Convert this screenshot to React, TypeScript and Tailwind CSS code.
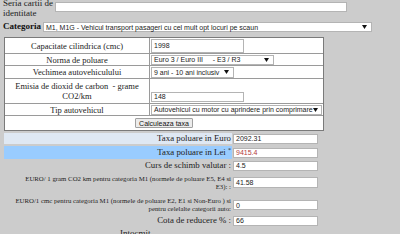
const serif = "font-['Liberation_Serif',serif]";
const sans = "font-['Liberation_Sans',Arial,sans-serif]";

function Arrow() {
  return (
    <svg width="5" height="4" viewBox="0 0 5 4" className="shrink-0">
      <path d="M0 0 L5 0 L2.5 4 Z" fill="#111" />
    </svg>
  );
}

function Field({ value, className = "", color = "text-[#222]" }: { value: string; className?: string; color?: string }) {
  return (
    <div
      className={`flex items-center bg-white border border-[#b4b4b4] px-[2px] text-[7px] leading-none ${sans} ${color} ${className}`}
    >
      {value}
    </div>
  );
}

function Select({ value, className = "" }: { value: string; className?: string }) {
  return (
    <div
      className={`flex items-center justify-between bg-white border border-[#b4b4b4] pl-[2px] pr-[4px] text-[7px] leading-none text-[#222] whitespace-pre ${sans} ${className}`}
    >
      <span>{value}</span>
      <Arrow />
    </div>
  );
}

function Row({ label, h, children }: { label: React.ReactNode; h: string; children: React.ReactNode }) {
  return (
    <div className={`flex border-b border-[#9a9a9a] ${h}`}>
      <div
        className={`w-[145px] shrink-0 flex items-center justify-center text-center text-[8.5px] leading-[10px] text-[#222] border-r border-[#9a9a9a] ${serif}`}
      >
        {label}
      </div>
      <div className="flex-1 flex items-center pl-[1px]">{children}</div>
    </div>
  );
}

function Result({
  label,
  value,
  h,
  bg = "",
  valueColor,
  small = false,
  inputTop = "",
}: {
  label: React.ReactNode;
  value: string;
  h: string;
  bg?: string;
  valueColor?: string;
  small?: boolean;
  inputTop?: string;
}) {
  return (
    <div className={`flex ${h}`}>
      <div
        className={`ml-[4px] w-[228px] shrink-0 flex items-center justify-end text-right pr-[1px] text-[#222] ${serif} ${bg} ${
          small ? "text-[6.8px] leading-[8px] whitespace-nowrap" : "text-[8.8px] leading-none"
        }`}
      >
        {label}
      </div>
      <div className={`ml-[1px] flex ${inputTop ? "items-start" : "items-center"}`}>
        <Field value={value} className={`w-[85px] h-[10px] ${inputTop}`} color={valueColor} />
      </div>
    </div>
  );
}

export default function App() {
  return (
    <div className="w-[400px] h-[247px] bg-white overflow-hidden">
      <div className="h-[234px] bg-[#cccccc] overflow-hidden">
        {/* Seria CI */}
        <div className="flex items-start -mt-[2px]">
          <div className={`w-[52px] pl-[3px] whitespace-nowrap text-[9px] leading-[10px] text-[#222] ${serif}`}>
            Seria cartii de
            <br />
            identitate
          </div>
          <Field value="" className="ml-[3px] mt-[4px] w-[292px] h-[10px]" />
        </div>

        {/* Categoria */}
        <div className="flex items-center mt-[4px] h-[10px]">
          <div className={`pl-[3px] w-[43px] text-[9px] font-bold text-[#111] ${serif}`}>Categoria</div>
          <Select
            value="M1, M1G - Vehicul transport pasageri cu cel mult opt locuri pe scaun"
            className="w-[329px] h-[10px]"
          />
        </div>

        {/* Form table */}
        <div className="mt-[5px] ml-[4px] w-[320px] bg-white border border-[#7a7a7a]">
          <Row label="Capacitate cilindrica (cmc)" h="h-[16px]">
            <Field value="1998" className="w-[93px] h-[14px]" />
          </Row>
          <Row label="Norma de poluare" h="h-[12px]">
            <Select value="Euro 3 / Euro III     - E3 / R3" className="w-[123px] h-[10px]" />
          </Row>
          <Row label="Vechimea autovehiculului" h="h-[13px]">
            <Select value="9 ani - 10 ani inclusiv" className="w-[83px] h-[11px]" />
          </Row>
          <Row
            label={
              <span>
                Emisia de dioxid de carbon&nbsp; - grame
                <br />
                CO2/km
              </span>
            }
            h="h-[25px]"
          >
            <Field value="148" className="w-[93px] h-[10px] mt-[11px]" />
          </Row>
          <Row label="Tip autovehicul" h="h-[12px]">
            <Select value="Autovehicul cu motor cu aprindere prin comprimare" className="w-[171px] h-[10px]" />
          </Row>
          <div className="h-[14px] flex items-center justify-center">
            <button
              className={`h-[10px] px-[3px] flex items-center text-[7px] leading-none text-[#111] bg-[#ececec] border border-[#a0a0a0] rounded-[1px] ${sans}`}
            >
              Calculeaza taxa
            </button>
          </div>
        </div>

        {/* Results */}
        <div className="mt-[2px] flex flex-col">
          <Result label="Taxa poluare in Euro" value="2092.31" h="h-[11px]" bg="bg-[#dfe8f3]" />
          <div className="h-[2px]" />
          <Result
            label={
              <span>
                Taxa poluare in Lei <sup className="text-[6px]">*</sup>
              </span>
            }
            value="9415.4"
            valueColor="text-[#b23b3b]"
            h="h-[13px]"
            bg="bg-[#99ccff]"
          />
          <Result label="Curs de schimb valutar :" value="4.5" h="h-[13px]" />
          <div className="h-[2px]" />
          <Result
            small
            label={
              <span>
                EURO/ 1 gram CO2 km pentru categoria M1 (normele de poluare E5, E4 si
                <br />
                E3): :
              </span>
            }
            value="41.58"
            h="h-[17px]"
            inputTop="mt-[3px] h-[11px]"
          />
          <div className="h-[5px]" />
          <Result
            small
            label={
              <span>
                EURO/1 cmc pentru categoria M1 (normele de poluare E2, E1 si Non-Euro ) si
                <br />
                pentru celelalte categorii auto:
              </span>
            }
            value="0"
            h="h-[18px]"
          />
          <Result label="Cota de reducere % :" value="66" h="h-[13px]" />
          <div className={`pl-[120px] mt-[2px] text-[9px] leading-none text-[#222] ${serif}`}>Intocmit</div>
        </div>
      </div>
    </div>
  );
}
